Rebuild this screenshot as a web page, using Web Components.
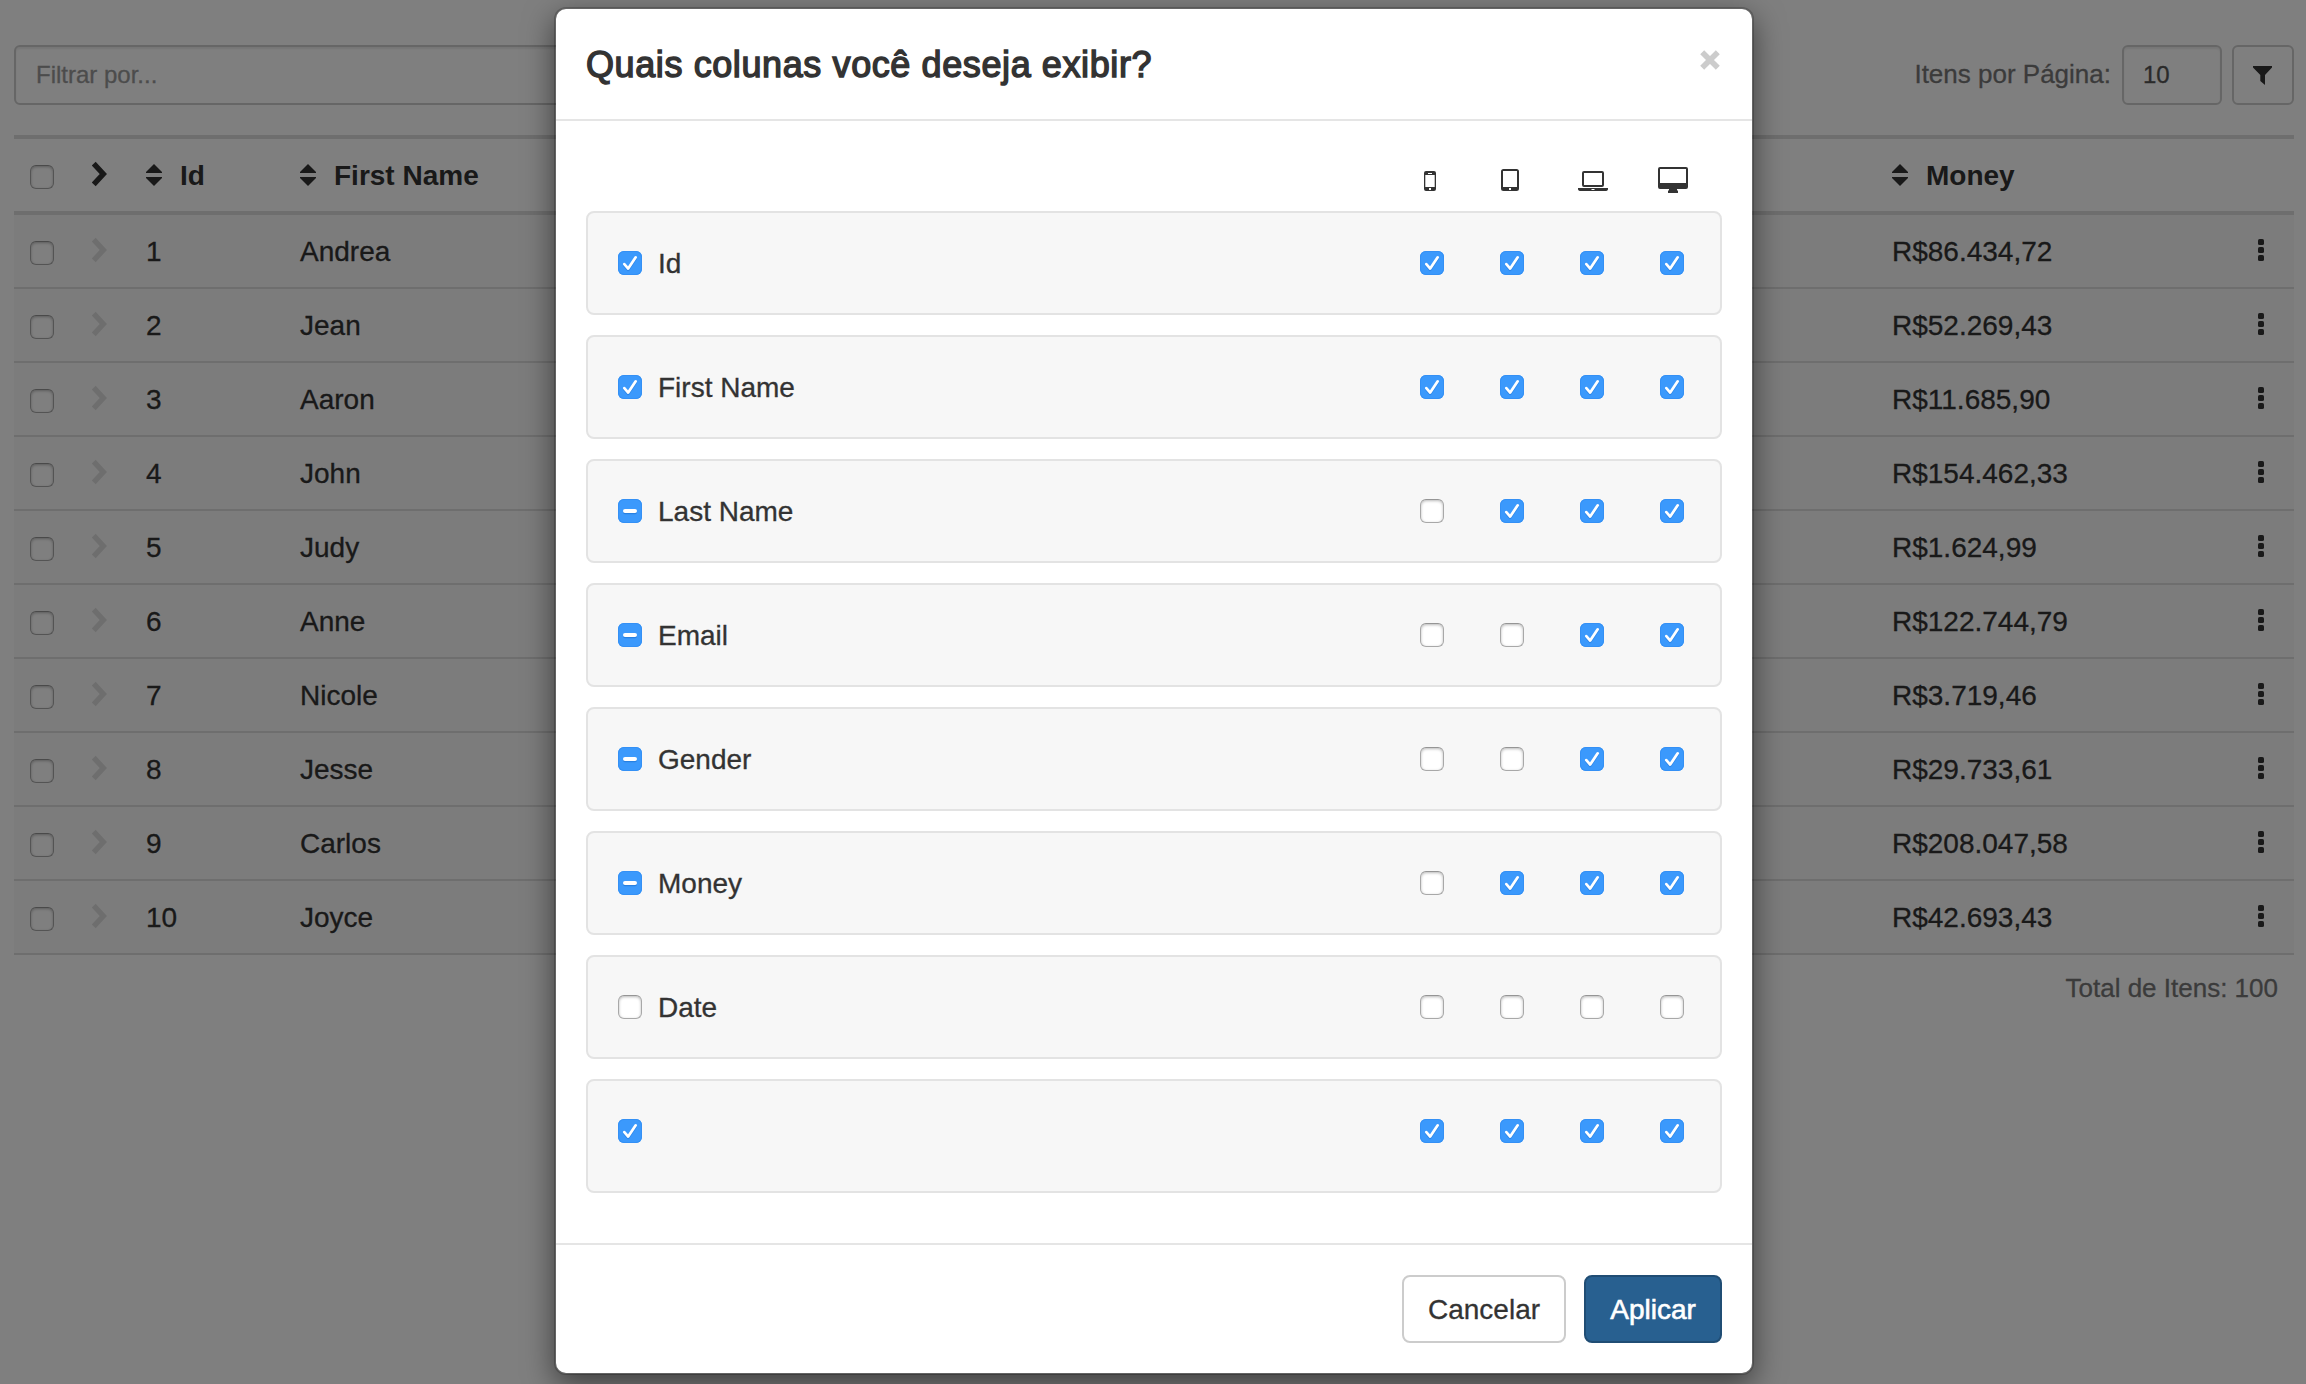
<!DOCTYPE html>
<html lang="pt-BR">
<head>
<meta charset="utf-8">
<title>Colunas</title>
<style>
html,body{margin:0;height:100%;overflow:hidden;background:#fff}
body{font-family:"Liberation Sans",Arial,sans-serif;font-size:28px;line-height:40px;color:#333;-webkit-text-stroke-width:.3px}
</style>
</head>
<body>
<data-page></data-page>
<column-modal></column-modal>
<script>
const define=(name,render)=>customElements.define(name,class extends HTMLElement{
  connectedCallback(){
    if(this.shadowRoot)return;
    this.attachShadow({mode:'open'}).innerHTML=render(this);
  }
});

define('check-box',el=>{
  const s=el.getAttribute('state')||'off';
  const mark=s==='on'
    ?'<path d="M6.3 13.1 L10.2 17.6 L17.7 6.3" transform="translate(0 1.2)" stroke="#1a6fd0" stroke-opacity=".45"/><path d="M6.3 13.1 L10.2 17.6 L17.7 6.3"/>'
    :s==='mixed'?'<path d="M7 13.2H17" stroke="#1a6fd0" stroke-opacity=".6" stroke-width="4"/><path d="M7 12H17" stroke-width="4"/>':'';
  return `<style>
  :host{display:block;width:24px;height:24px;flex:none}
  .b{box-sizing:border-box;width:24px;height:24px;border-radius:6px}
  .off{background:#fff;border:1px solid #a8a8a8;border-top-color:#959595;box-shadow:inset 0 1px 3px rgba(0,0,0,.28)}
  .on,.mixed{background:#3b99fc;box-shadow:inset 0 0 0 1px #3490f5}
  svg{display:block;fill:none;stroke:#fff;stroke-width:2.7;stroke-linecap:round;stroke-linejoin:round}
  </style><div class="b ${s}">${mark?`<svg width="24" height="24" viewBox="0 0 24 24">${mark}</svg>`:''}</div>`;
});

const ICONS={
  chevron:[16,26,'<path d="M1.7 2.6 L11.3 13 L1.7 23.4" fill="none" stroke="currentColor" stroke-width="5.4"/>'],
  sort:[16,22,'<path d="M8 0L16 8V9H0V8ZM0 13H16V14L8 22L0 14Z"/>'],
  dots:[6,22,'<rect width="6" height="6" rx="1.6"/><rect y="8" width="6" height="6" rx="1.6"/><rect y="16" width="6" height="6" rx="1.6"/>'],
  funnel:[19,19,'<path d="M0 0H19V1.5L12 9V19L7.3 15V9L0 1.5Z"/>'],
  phone:[12,20,'<path fill-rule="evenodd" d="M2 0H10Q12 0 12 2V18Q12 20 10 20H2Q0 20 0 18V2Q0 0 2 0ZM1.3 4V16H10.7V4ZM4 2V3H8V2ZM5 17V19H7V17Z"/>'],
  tablet:[18,22,'<path fill-rule="evenodd" d="M2.5 0H15.5Q18 0 18 2.5V19.5Q18 22 15.5 22H2.5Q0 22 0 19.5V2.5Q0 0 2.5 0ZM2 2V18H16V2ZM8 19V21H10V19Z"/>'],
  laptop:[30,20,'<path fill-rule="evenodd" d="M6 0H24Q26 0 26 2V14Q26 16 24 16H6Q4 16 4 14V2Q4 0 6 0ZM6 2V14H24V2ZM0 17H30V18Q30 20 27 20H3Q0 20 0 18ZM13.5 18V19H16.5V18Z"/>'],
  desktop:[30,26,'<path fill-rule="evenodd" d="M2 0H28Q30 0 30 2V20Q30 22 28 22H19V23.5H20V26H10V23.5H11V22H2Q0 22 0 20V2Q0 0 2 0ZM2 2V16H28V2Z"/>'],
  close:[20,20,'<path d="M2.2 2.2L17.8 17.8M17.8 2.2L2.2 17.8" fill="none" stroke="currentColor" stroke-width="5.6"/>']
};
define('ui-icon',el=>{
  const [w,h,p]=ICONS[el.getAttribute('name')];
  return `<style>:host{display:block;flex:none;width:${w}px;height:${h}px}svg{display:block;fill:currentColor}</style><svg width="${w}" height="${h}" viewBox="0 0 ${w} ${h}">${p}</svg>`;
});

define('filter-bar',()=>`<style>
:host{display:flex;height:60px;font-size:24px}
.box{box-sizing:border-box;border:2px solid #ccc;border-radius:6px;display:flex;align-items:center;height:60px;background:#fff}
.in{box-shadow:inset 0 2px 2px rgba(0,0,0,.075);color:#555}
.q{width:1000px;padding-left:20px;color:#999}
.lab{margin-left:auto;font-size:26px;line-height:59px;color:#777;margin-right:11px}
.n{width:100px;padding-left:19px;margin-right:10px}
.f{width:62px;justify-content:center;padding-right:2px}
</style><div class="box in q">Filtrar por...</div><div class="lab">Itens por Página:</div><div class="box in n">10</div><div class="box f"><ui-icon name="funnel"></ui-icon></div>`);

const GRID='display:grid;grid-template-columns:62px 54px 154px 1592px 1fr 36px;align-items:center;padding-left:16px';
define('table-head',()=>`<style>
:host{${GRID};height:72px;border-top:4px solid #ddd;border-bottom:4px solid #ddd;font-weight:bold;-webkit-text-stroke-width:0}
.s{display:flex;align-items:center;gap:18px}
check-box{margin-top:4px}
ui-icon{margin-bottom:2px}.s ui-icon{margin:0}
.s span{margin-top:1px}
</style><check-box></check-box><ui-icon name="chevron"></ui-icon>
<div class="s"><ui-icon name="sort"></ui-icon><span>Id</span></div>
<div class="s"><ui-icon name="sort"></ui-icon><span>First Name</span></div>
<div class="s"><ui-icon name="sort"></ui-icon><span>Money</span></div>`);

define('table-row',el=>`<style>
:host{${GRID};height:72px;border-bottom:2px solid #ddd;background:#f9f9f9}
check-box{margin-top:4px}
span{margin-top:2px}
.c{color:#ddd;margin-bottom:3px}
.d{margin-bottom:2px}
</style><check-box></check-box><ui-icon class="c" name="chevron"></ui-icon>
<span>${el.getAttribute('num')}</span><span>${el.getAttribute('name')}</span><span>R$${el.getAttribute('money')}</span><ui-icon class="d" name="dots"></ui-icon>`);

const PEOPLE=[['Andrea','86.434,72'],['Jean','52.269,43'],['Aaron','11.685,90'],['John','154.462,33'],['Judy','1.624,99'],['Anne','122.744,79'],['Nicole','3.719,46'],['Jesse','29.733,61'],['Carlos','208.047,58'],['Joyce','42.693,43']];
define('data-page',()=>`<style>
:host{display:flex;flex-direction:column;box-sizing:border-box;width:2306px;height:1384px;padding:45px 12px 0 14px}
table-head{margin-top:30px}
.t{align-self:flex-end;font-size:26px;color:#777;margin:13px 16px 0 0}
</style><filter-bar></filter-bar><table-head></table-head>
${PEOPLE.map((p,i)=>`<table-row num="${i+1}" name="${p[0]}" money="${p[1]}"></table-row>`).join('')}
<div class="t">Total de Itens: 100</div>`);

define('column-item',el=>{
  const st=c=>({1:'on',0:'off',m:'mixed'})[c];
  const [a,...r]=el.getAttribute('checks');
  return `<style>
:host{display:flex;box-sizing:border-box;height:104px;padding:38px 36px 0 30px;border:2px solid #e3e3e3;border-radius:8px;background:#f7f7f7}
:host([last]){height:114px}
.l{margin-left:16px;line-height:26px;flex:1}
.r{display:flex;gap:56px}
</style><check-box state="${st(a)}"></check-box><div class="l"><slot></slot></div><div class="r">${r.map(c=>`<check-box state="${st(c)}"></check-box>`).join('')}</div>`;
});

define('ui-button',()=>`<style>
:host{display:flex;box-sizing:border-box;height:68px;align-items:center;justify-content:center;padding-top:1px;border:2px solid #ccc;border-radius:8px;background:#fff;color:#333}
:host([primary]){background:#286090;border-color:#204d74;color:#fff;-webkit-text-stroke:.6px #fff}
</style><slot></slot>`);

const COLS=[['Id','11111'],['First Name','11111'],['Last Name','m0111'],['Email','m0011'],['Gender','m0011'],['Money','m0111'],['Date','00000'],['','11111']];
define('column-modal',()=>`<style>
:host{position:absolute;inset:0;background:rgba(0,0,0,.5);display:flex;justify-content:center;align-items:flex-start}
.m{display:flex;flex-direction:column;box-sizing:border-box;width:1200px;height:1368px;margin:7px 0 0 2px;background:#fff;background-clip:padding-box;border:2px solid rgba(0,0,0,.2);border-radius:12px;box-shadow:0 10px 30px rgba(0,0,0,.5)}
.h{display:flex;box-sizing:border-box;height:112px;padding:31px 32px 0 30px;border-bottom:2px solid #e5e5e5}
h4{margin:0;flex:1;font-size:36px;font-weight:400;line-height:50px;-webkit-text-stroke:1.4px #333;letter-spacing:.6px}
.x{color:#ccc;margin-top:10px}
.body{padding:0 30px;flex:1}
.dev{display:flex;justify-content:flex-end;align-items:center;height:90px;box-sizing:border-box;padding:28px 9px 0 0}
.dev div{width:80px;display:flex;justify-content:center}
.dev .phone{padding-top:2px}
.dev .laptop{padding-top:2px;margin-left:3px}
.list{display:flex;flex-direction:column;gap:20px}
.f{box-sizing:border-box;height:130px;border-top:2px solid #e5e5e5;padding:30px;display:flex;justify-content:flex-end;gap:18px}
</style><div class="m">
<div class="h"><h4>Quais colunas você deseja exibir?</h4><ui-icon class="x" name="close"></ui-icon></div>
<div class="body"><div class="dev">${['phone','tablet','laptop','desktop'].map(n=>`<div class="${n}"><ui-icon name="${n}"></ui-icon></div>`).join('')}</div>
<div class="list">${COLS.map(([n,c])=>`<column-item checks="${c}"${n?'':' last'}>${n}</column-item>`).join('')}</div></div>
<div class="f"><ui-button style="width:164px">Cancelar</ui-button><ui-button primary style="width:138px">Aplicar</ui-button></div>
</div>`);
</script>
</body>
</html>
